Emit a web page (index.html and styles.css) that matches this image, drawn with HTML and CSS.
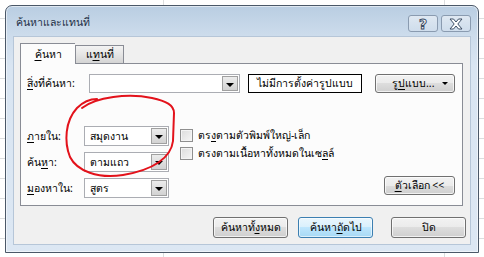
FILE: index.html
```html
<!DOCTYPE html>
<html lang="th">
  <head>
    <meta charset="UTF-8" />
    <title>ค้นหาและแทนที่</title>
    <link rel="stylesheet" href="styles.css">
  </head>

  <body>
    <div id="dialog">
      <header class="dialog__title">
        <span class="dialog__caption">ค้นหาและแทนที่</span>
        <div class="dialog__ctrls">
          <span class="ctrl ctrl--help">?</span>
          <span class="ctrl">
            <svg width="16" height="12" viewBox="0 0 16 12">
              <path d="M2 1h3.5L8 4l2.5-3H14L9.8 6 14 11h-3.5L8 8 5.5 11H2l4.2-5z" fill="#fff" stroke="#3d4f66" stroke-width="1" stroke-linejoin="round" />
            </svg>
          </span>
        </div>
      </header>

      <div class="dialog__body">
        <nav class="tabs">
          <span class="tabs__item tabs__item--on"><span><u>ค้</u>นหา</span></span>
          <span class="tabs__item"><span>แ<u>ท</u>นที่</span></span>
        </nav>

        <section class="panel">
          <div class="find">
            <label class="find__label"><u>สิ่</u>งที่ค้นหา:</label>
            <div class="combo combo--wide">
              <span class="combo__text"></span>
              <span class="combo__btn"></span>
            </div>
            <span class="find__preview">ไม่มีการตั้งค่ารูปแบบ</span>
            <button class="btn btn--format"><span>รู<u>ป</u>แบบ...</span><i class="btn__caret"></i></button>
          </div>

          <div class="opts">
            <div class="opts__fields">
              <label class="opts__label"><u>ภ</u>ายใน:</label>
              <div class="combo">
                <span class="combo__text">สมุดงาน</span>
                <span class="combo__btn"></span>
              </div>
              <label class="opts__label">ค้น<u>ห</u>า:</label>
              <div class="combo">
                <span class="combo__text">ตามแถว</span>
                <span class="combo__btn"></span>
              </div>
              <label class="opts__label"><u>ม</u>องหาใน:</label>
              <div class="combo">
                <span class="combo__text">สูตร</span>
                <span class="combo__btn"></span>
              </div>
            </div>

            <div class="opts__checks">
              <label class="check"><span class="check__box"></span><span>ตร<u>ง</u>ตามตัวพิมพ์ใหญ่-เล็ก</span></label>
              <label class="check"><span class="check__box"></span><span>ตรงตามเนื้อหาทั้งหมดในเซ<u>ล</u>ล์</span></label>
            </div>

            <button class="btn btn--more"><u>ตั</u>วเลือก &lt;&lt;</button>
          </div>
        </section>

        <footer class="actions">
          <button class="btn">ค้นหาทั้<u>ง</u>หมด</button>
          <button class="btn btn--focus">ค้นหา<u>ถั</u>ดไป</button>
          <button class="btn btn--close">ปิด</button>
        </footer>
      </div>
    </div>

    <!-- pen mark drawn over the screenshot -->
    <svg class="mark" width="484" height="257" viewBox="0 0 484 257">
      <path d="M82 108C96 97 128 93 152 98C166 101 174 105 174 113L173 141C171 158 153 170 123 175C98 179 77 171 70 157C64 142 65 121 77 108C83 102 90 99 97 99" fill="none" stroke="#e3121b" stroke-width="2" stroke-linecap="round" />
    </svg>
  </body>
</html>
```

FILE: styles.css
```css
* {
  box-sizing: border-box;
}

html,
body {
  height: 257px;
}

body {
  margin: 0;
  padding: 5px 0 0 5px;
  overflow: hidden;
  position: relative;
  font-family: "Noto Sans", "DejaVu Sans", sans-serif;
  font-size: 10.5px;
  color: #000;
  background-color: #fff;
  background-image:
    linear-gradient(to right, transparent 163px, #dcdedf 163px, #dcdedf 164px, transparent 164px),
    linear-gradient(to right, transparent 444px, #dcdedf 444px, #dcdedf 445px, transparent 445px),
    repeating-linear-gradient(to bottom, transparent 0, transparent 18px, #dcdedf 18px, #dcdedf 19px, transparent 19px, transparent 20px);
}

u {
  text-decoration: underline;
  text-underline-offset: 2px;
}

/* window frame */
#dialog {
  width: 474px;
  height: 248px;
  padding: 0 7px 7px 7px;
  border: 1px solid #4b5868;
  border-radius: 7px 7px 0 0;
  background: linear-gradient(#b9cde2, #cddcec 30px, #d9e5f2 60px, #dce7f3);
  box-shadow: inset 0 0 0 1px rgba(255, 255, 255, 0.55);
}

.dialog__title {
  height: 30px;
  display: flex;
  align-items: center;
  justify-content: space-between;
  padding-left: 3px;
}

.dialog__caption {
  color: #1e2f45;
  margin-top: 2px;
}

.dialog__ctrls {
  display: flex;
  gap: 3px;
  margin-top: 5px;
}

.ctrl {
  width: 30px;
  height: 17px;
  display: flex;
  align-items: center;
  justify-content: center;
  border: 1px solid #8a9bb0;
  border-radius: 3px;
  background: linear-gradient(rgba(255, 255, 255, 0.5), rgba(255, 255, 255, 0.1));
}

.ctrl--help {
  font-family: "DejaVu Sans", sans-serif;
  font-size: 14px;
  font-weight: bold;
  color: #fff;
  -webkit-text-stroke: 1px #3d4f66;
}

.dialog__body {
  height: 209px;
  padding: 6px 0 0 6px;
  border: 1px solid #b6c6d8;
  background: #f0f0f0;
}

/* tabs */
.tabs {
  display: flex;
  align-items: flex-end;
  height: 20px;
  position: relative;
  z-index: 1;
}

.tabs__item {
  width: 49px;
  height: 18px;
  display: flex;
  align-items: center;
  justify-content: center;
  border: 1px solid #898c95;
  border-bottom: 0;
  background: linear-gradient(#f3f3f3, #e5e5e5 50%, #d4d4d4);
}

.tabs__item--on {
  width: 55px;
  height: 21px;
  margin-bottom: -1px;
  border-right: 0;
  background: #fcfcfc;
}

.panel {
  width: 443px;
  height: 143px;
  padding: 10px 7px 0 6px;
  border: 1px solid #898c95;
  background: #fcfcfc;
}

/* find row */
.find {
  display: flex;
  align-items: center;
  height: 19px;
}

.find__label {
  width: 62px;
}

.find__preview {
  width: 114px;
  height: 19px;
  margin-left: 8px;
  display: flex;
  align-items: center;
  justify-content: center;
  white-space: nowrap;
  border: 1px solid #000;
  background: #fff;
}

/* combo boxes */
.combo {
  width: 85px;
  height: 20px;
  display: flex;
  border: 1px solid #abadb3;
  background: #fff;
}

.combo--wide {
  width: 151px;
  height: 19px;
}

.combo__text {
  flex: 1;
  display: flex;
  align-items: center;
  padding-left: 5px;
}

.combo__btn {
  width: 16px;
  margin: 1px;
  position: relative;
  border: 1px solid #a0a0a0;
  background: linear-gradient(#ececec, #d2d2d2);
}

.combo__btn::after {
  content: "";
  position: absolute;
  left: 3px;
  top: 6px;
  border-left: 4px solid transparent;
  border-right: 4px solid transparent;
  border-top: 4px solid #000;
}

/* buttons */
.btn {
  height: 21px;
  width: 75px;
  padding: 0;
  font: inherit;
  color: #000;
  border: 1px solid #707070;
  border-radius: 3px;
  background: linear-gradient(#f2f2f2, #ebebeb 50%, #dddddd 50%, #cfcfcf);
  box-shadow: inset 0 0 0 1px rgba(255, 255, 255, 0.7);
}

.btn--format {
  width: 80px;
  height: 19px;
  margin-left: 13px;
  display: flex;
  align-items: center;
  padding-left: 16px;
}

.btn__caret {
  margin-left: auto;
  margin-right: 6px;
  border-left: 3px solid transparent;
  border-right: 3px solid transparent;
  border-top: 3px solid #000;
}

.btn--more {
  width: 71px;
  height: 19px;
  align-self: flex-end;
  margin: 0 0 3px auto;
}

.btn--focus {
  border-color: #3c7fb1;
  background: linear-gradient(#eaf6fd, #d9f0fc 50%, #bee6fd 50%, #a7d9f5);
  box-shadow: inset 0 0 0 1px rgba(255, 255, 255, 0.6);
}

/* options area */
.opts {
  display: flex;
  margin-top: 33px;
}

.opts__fields {
  display: grid;
  grid-template-columns: 57px 85px;
  row-gap: 6px;
  align-items: center;
}

.opts__checks {
  display: flex;
  flex-direction: column;
  gap: 5px;
  margin: 3px 0 0 11px;
}

.check {
  display: flex;
  align-items: center;
  height: 13px;
  gap: 5px;
}

.check__box {
  width: 13px;
  height: 13px;
  border: 1px solid #8f8f8f;
  background: linear-gradient(135deg, #dcdcdc, #f6f6f6);
  box-shadow: inset 0 0 0 1px #f4f4f4;
}

/* bottom buttons */
.actions {
  display: flex;
  justify-content: flex-end;
  gap: 10px;
  margin: 11px 4px 0 0;
}

.btn--close {
  margin-left: 8px;
}

.mark {
  position: absolute;
  left: 0;
  top: 0;
  pointer-events: none;
}
```
